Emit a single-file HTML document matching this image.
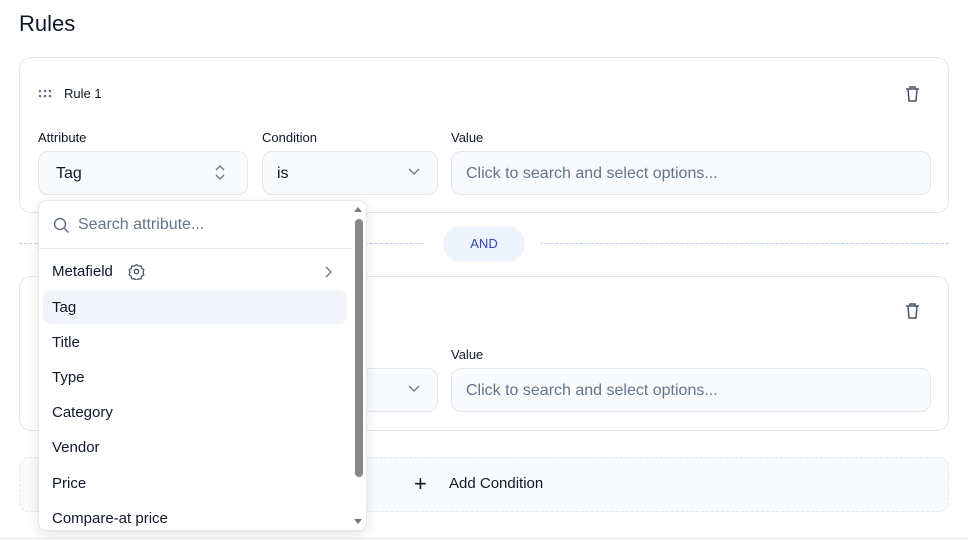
<!DOCTYPE html>
<html><head><meta charset="utf-8"><style>
*{box-sizing:border-box;margin:0;padding:0}
body{width:968px;height:540px;background:#fff;font-family:"Liberation Sans",sans-serif;color:#0f172a;position:relative;overflow:hidden}
.a{position:absolute}
.card{position:absolute;left:19px;width:930px;border:1px solid #e2e8f0;border-radius:12px;background:#fff}
.lbl{position:absolute;font-size:13px;color:#0f172a}
.inp{position:absolute;height:44px;background:#f8fafc;border:1px solid #e2e8f0;border-radius:10px;font-size:16px;line-height:43px;padding-left:17px}
.ph{color:#64748b;padding-left:14px}
.item{position:absolute;left:13px;font-size:15px;color:#0f172a}
</style></head><body>
<div class="a" style="left:19px;top:11px;font-size:22px">Rules</div>

<div class="card" style="top:57px;height:156px"></div>
<svg class="a" style="left:38px;top:89px" width="15" height="10"><g fill="#64748b"><circle cx="2" cy="2" r="1.3"/><circle cx="7" cy="2" r="1.3"/><circle cx="12" cy="2" r="1.3"/><circle cx="2" cy="7" r="1.3"/><circle cx="7" cy="7" r="1.3"/><circle cx="12" cy="7" r="1.3"/></g></svg>
<div class="a" style="left:64px;top:86px;font-size:13px">Rule 1</div>
<svg class="a" style="left:904px;top:85px" width="17" height="18" fill="none" stroke="#475569" stroke-width="1.5"><path d="M2 4h13M6 4V2h5v2M4 4l1 12h7l1-12"/></svg>
<div class="lbl" style="left:38px;top:130px">Attribute</div>
<div class="lbl" style="left:262px;top:130px">Condition</div>
<div class="lbl" style="left:451px;top:130px">Value</div>
<div class="inp" style="left:38px;top:151px;width:210px">Tag</div>
<svg class="a" style="left:214px;top:164px" width="12" height="17" fill="none" stroke="#64748b" stroke-width="1.3"><path d="M2 6l4-4 4 4M2 11l4 4 4-4"/></svg>
<div class="inp" style="left:262px;top:151px;width:176px;padding-left:14px">is</div>
<svg class="a" style="left:408px;top:168px" width="12" height="8" fill="none" stroke="#64748b" stroke-width="1.3"><path d="M1 1l5 5 5-5"/></svg>
<div class="inp ph" style="left:451px;top:151px;width:480px">Click to search and select options...</div>

<div class="a" style="left:19px;top:243px;width:930px;border-top:1px dashed #b6cdea"></div>
<div class="a" style="left:425px;top:226px;width:116px;height:36px;background:#fff"></div>
<div class="a" style="left:443px;top:226px;width:82px;height:36px;border-radius:18px;background:#eef4fd;color:#3347b5;font-size:13px;text-align:center;line-height:36px">AND</div>

<div class="card" style="top:276px;height:155px"></div>
<svg class="a" style="left:904px;top:302px" width="17" height="18" fill="none" stroke="#475569" stroke-width="1.5"><path d="M2 4h13M6 4V2h5v2M4 4l1 12h7l1-12"/></svg>
<div class="lbl" style="left:451px;top:347px">Value</div>
<div class="inp" style="left:262px;top:368px;width:176px"></div>
<svg class="a" style="left:408px;top:385px" width="12" height="8" fill="none" stroke="#64748b" stroke-width="1.3"><path d="M1 1l5 5 5-5"/></svg>
<div class="inp ph" style="left:451px;top:368px;width:480px">Click to search and select options...</div>

<div class="a" style="left:19px;top:457px;width:930px;height:55px;border:1px dashed #e2e8f0;border-radius:10px;background:#f8fafc"></div>
<div class="a" style="left:414px;top:473px;font-size:22px;line-height:22px">+</div>
<div class="a" style="left:449px;top:475px;font-size:15px">Add Condition</div>
<div class="a" style="left:0;top:538px;width:968px;border-top:1px solid #e2e8f0"></div>

<div class="a" style="left:38px;top:200px;width:329px;height:331px;background:#fff;border:1px solid #e2e8f0;border-radius:8px;box-shadow:0 4px 12px rgba(0,0,0,.1);overflow:hidden">
<svg class="a" style="left:14px;top:16px" width="17" height="17" fill="none" stroke="#64748b" stroke-width="1.5"><circle cx="7" cy="7" r="5.5"/><path d="M11 11l4.5 4.5"/></svg>
<div class="a" style="left:39px;top:15px;font-size:16px;color:#64748b">Search attribute...</div>
<div class="a" style="left:0;top:47px;width:312px;border-top:1px solid #e2e8f0"></div>
<div class="a" style="left:4px;top:89px;width:304px;height:34px;background:#f1f5f9;border-radius:8px"></div>
<div class="item" style="top:62px">Metafield</div>
<svg class="a" style="left:89px;top:62px" width="17" height="17" fill="none" stroke="#475569" stroke-width="1.3"><path d="M8.5 1.5l2 1.5 2.5 0 .8 2.4 2 1.6-.8 2.4.8 2.4-2 1.6-.8 2.4-2.5 0-2 1.5-2-1.5-2.5 0-.8-2.4-2-1.6.8-2.4-.8-2.4 2-1.6.8-2.4 2.5 0z"/><circle cx="8.5" cy="8.5" r="2.2"/></svg>
<svg class="a" style="left:285px;top:65px" width="8" height="12" fill="none" stroke="#64748b" stroke-width="1.3"><path d="M2 1l5 5-5 5"/></svg>
<div class="item" style="top:98px">Tag</div>
<div class="item" style="top:133px">Title</div>
<div class="item" style="top:168px">Type</div>
<div class="item" style="top:203px">Category</div>
<div class="item" style="top:238px">Vendor</div>
<div class="item" style="top:274px">Price</div>
<div class="item" style="top:309px">Compare-at price</div>
<svg class="a" style="left:314px;top:4px" width="10" height="8"><path d="M1 7l4-5 4 5z" fill="#777"/></svg>
<div class="a" style="left:316px;top:18px;width:8px;height:258px;background:#888;border-radius:4px"></div>
<svg class="a" style="left:314px;top:317px" width="10" height="8"><path d="M1 1l4 5 4-5z" fill="#777"/></svg>
</div>
</body></html>
